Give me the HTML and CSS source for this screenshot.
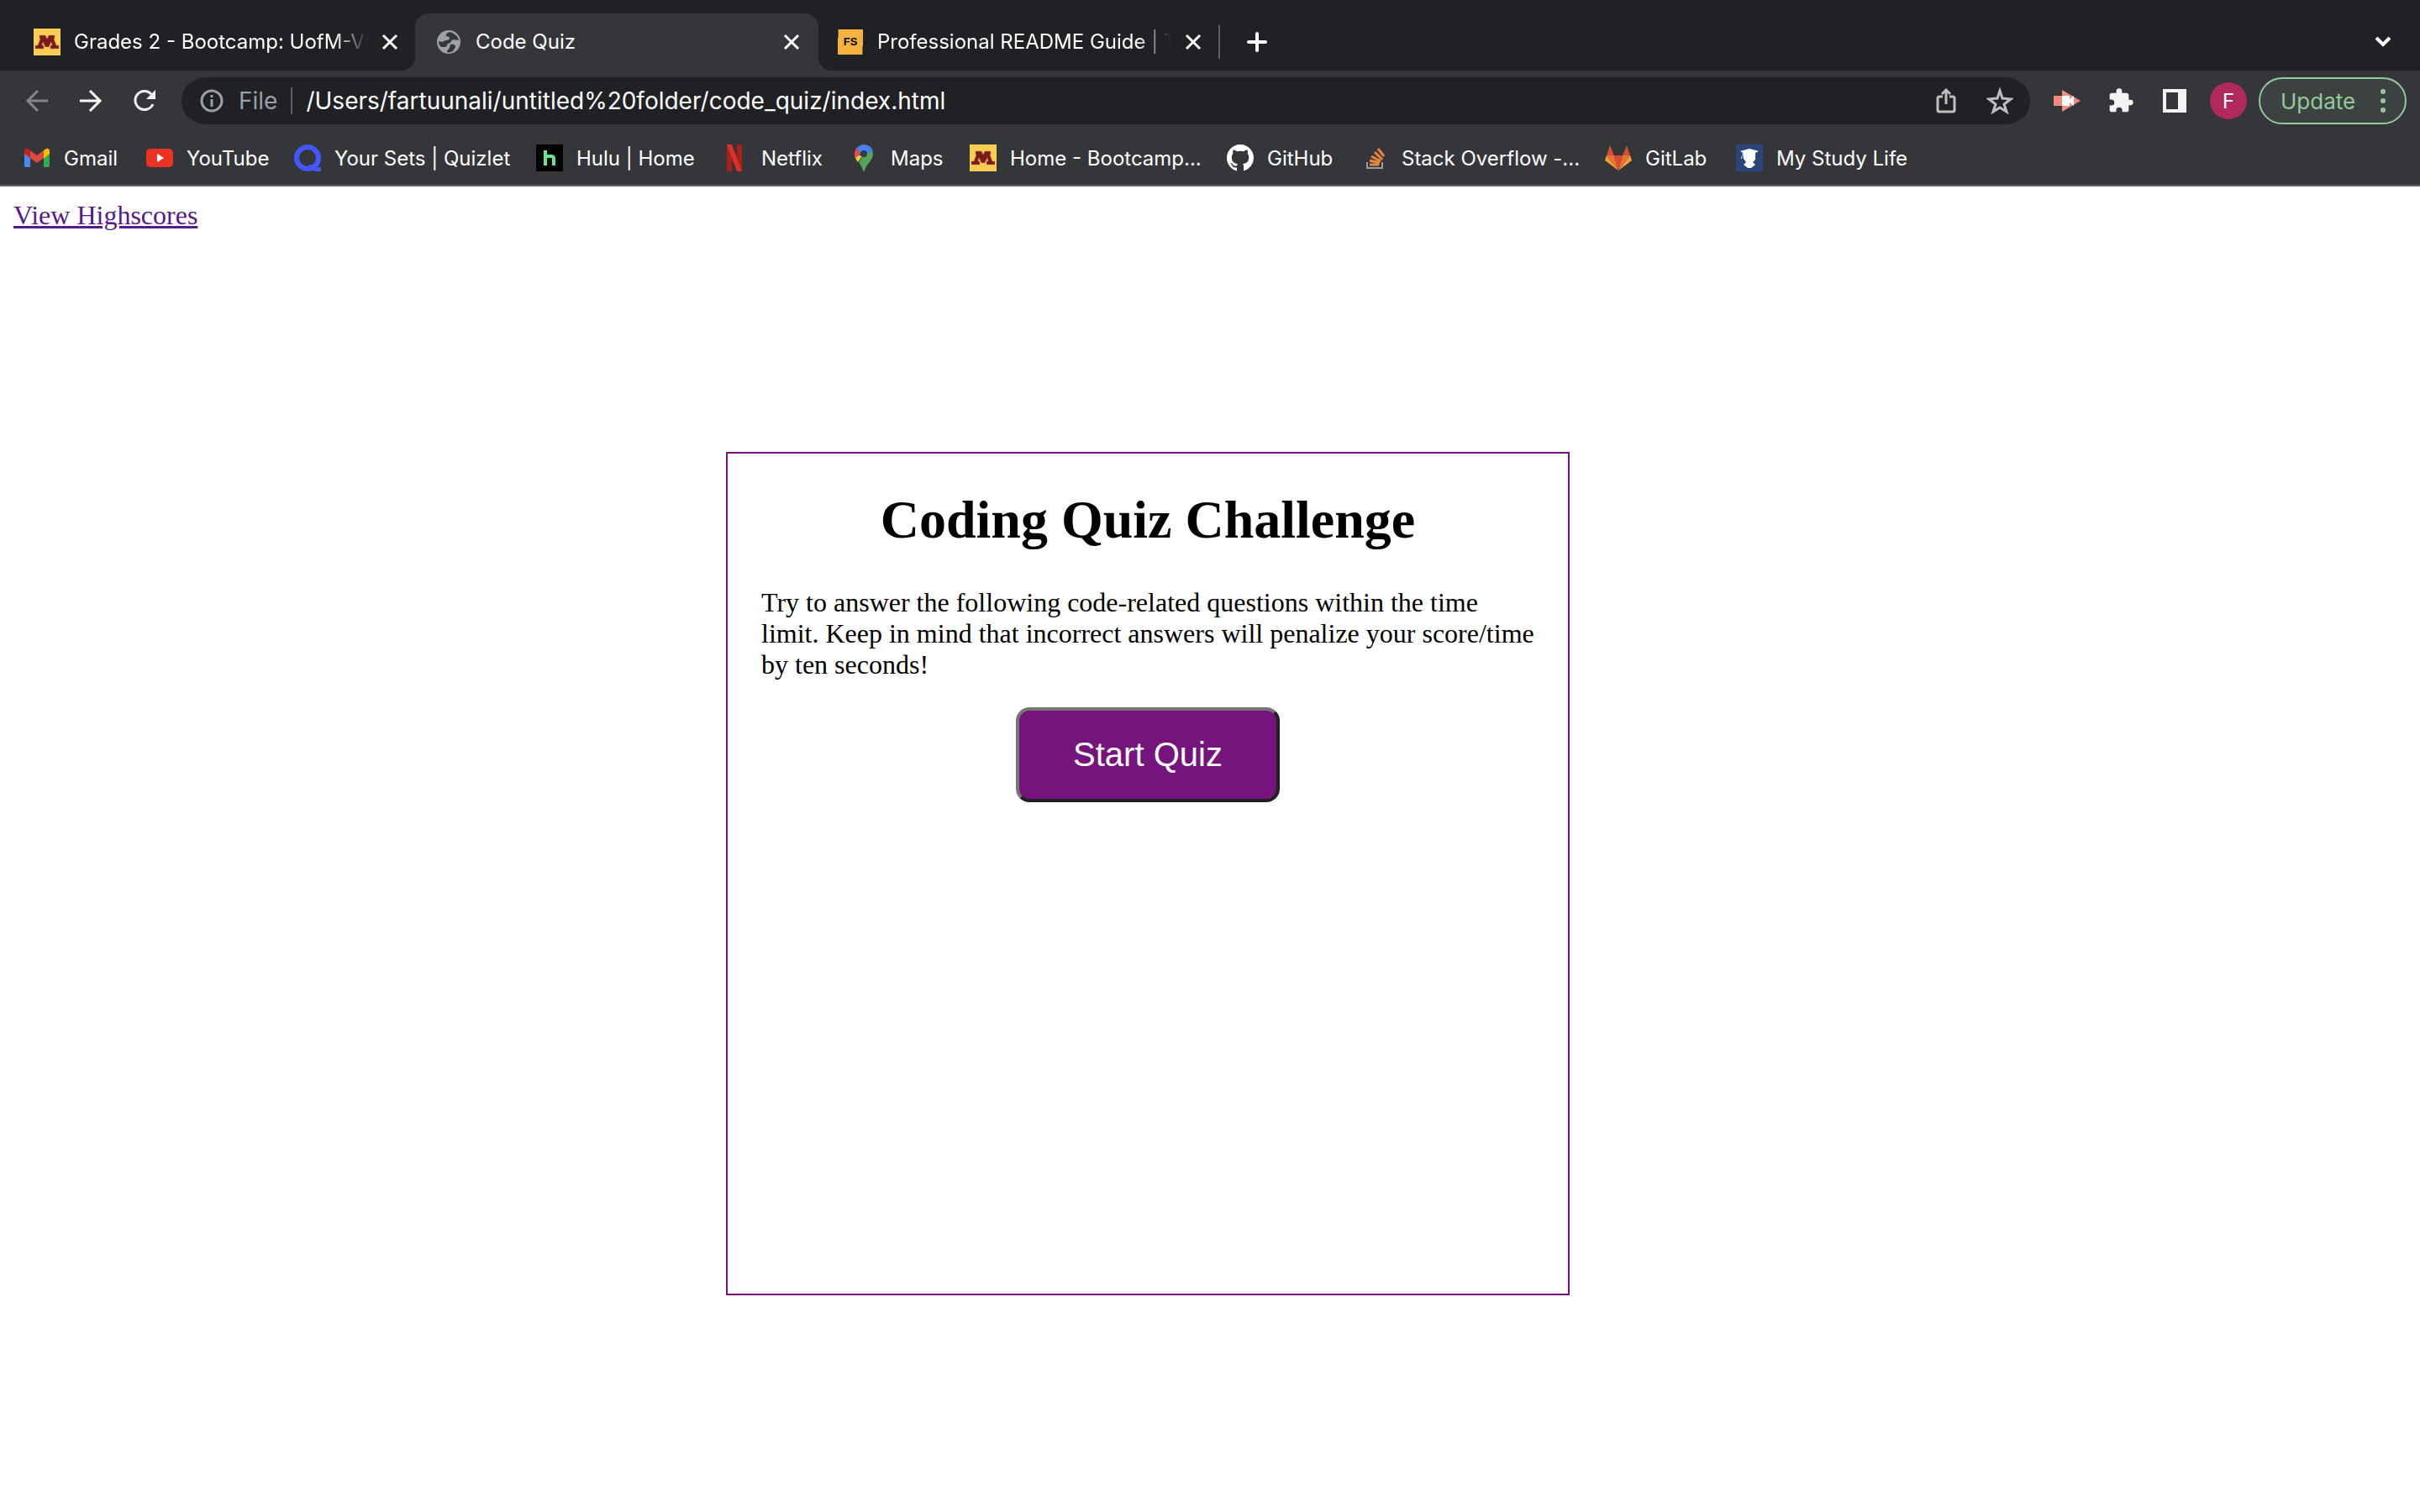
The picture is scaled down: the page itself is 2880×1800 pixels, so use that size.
FILE: index.html
```html
<!DOCTYPE html>
<html lang="en">
<head>
<meta charset="utf-8">
<title>Code Quiz</title>
<link rel="stylesheet" href="styles.css">
</head>
<body>
<svg class="defs" aria-hidden="true">
  <symbol id="close" viewBox="0 0 20 20"><path d="M2 2l16 16M18 2L2 18" stroke="currentColor" stroke-width="3" fill="none"/></symbol>
  <symbol id="umn" viewBox="0 0 32 32"><path d="M0 0h32v32H0z" fill="#f9cd53"/><path d="M7 8h7l2 4 2-4h7v4h-1l3 8h3v4H20v-4h2l-1-4-3 6h-4l-3-6-1 4h2v4H2v-4h3l3-8H7z" fill="#7a1a20" stroke="#c98a3a" stroke-width=".5"/></symbol>
</svg>
<header class="browser">
  <nav class="tabs" aria-label="Tabs">
    <div class="tab">
      <svg class="ico"><use href="#umn"/></svg>
      <span class="tab-title fade">Grades 2 - Bootcamp: UofM-VI</span>
      <button class="plain" aria-label="Close tab"><svg class="x"><use href="#close"/></svg></button>
    </div>
    <div class="tab active">
      <svg class="ico" viewBox="0 0 32 32"><circle cx="16" cy="16" r="14" fill="#9aa0a6"/><path d="M17 4c-3 1-5 3-4 5 2 1 4 0 4 3-1 3-6 1-8 4l-5-1c0 3 1 5 3 7 4 0 7 0 7-2 0-3 4-2 5-5 2-3 5-1 9-1-1-4-4-8-11-10zM18 19c4-1 6 0 6 3l-3 5c-3 1-5 2-7 1 0-3 2-3 3-5z" fill="#35363a"/></svg>
      <span class="tab-title">Code Quiz</span>
      <button class="plain" aria-label="Close tab"><svg class="x"><use href="#close"/></svg></button>
    </div>
    <div class="tab last">
      <svg class="ico" viewBox="0 0 32 32"><path d="M1 1h30v30H1z" fill="#f5b23d"/><path d="M1 1v10M31 21v10" stroke="#111" stroke-width="1"/><text x="16" y="20" text-anchor="middle" class="fs">FS</text></svg>
      <span class="tab-title fade">Professional README Guide | T</span>
      <button class="plain" aria-label="Close tab"><svg class="x"><use href="#close"/></svg></button>
    </div>
    <button class="plain new" aria-label="New tab"><svg width="24" height="24"><path d="M12 2v20M2 12h20" stroke="#fff" stroke-width="4" stroke-linecap="round"/></svg></button>
    <button class="plain search" aria-label="Search tabs"><svg width="20" height="14"><path d="M2 2l8 8 8-8" stroke="#fff" stroke-width="4" fill="none"/></svg></button>
  </nav>
  <div class="toolbar">
    <div class="history">
      <button class="plain" aria-label="Back"><svg width="32" height="32" fill="none" stroke="#85868a" stroke-width="3"><path d="M29 16H5M17 4L5 16l12 12"/></svg></button>
      <button class="plain" aria-label="Forward"><svg width="32" height="32" fill="none" stroke="#fff" stroke-width="3"><path d="M3 16h24M15 4l12 12-12 12"/></svg></button>
      <button class="plain" aria-label="Reload"><svg width="32" height="32"><path d="M26 20a11 11 0 1 1-2-12" fill="none" stroke="#f1f3f4" stroke-width="3"/><path d="M29 3v11H18z" fill="#f1f3f4"/></svg></button>
    </div>
    <div class="address">
      <svg width="28" height="28"><circle cx="14" cy="14" r="12" fill="none" stroke="#9aa0a6" stroke-width="3"/><path d="M14 12v9M14 7v3" stroke="#9aa0a6" stroke-width="3"/></svg>
      <label class="scheme" for="url">File</label>
      <input class="url" id="url" value="/Users/fartuunali/untitled%20folder/code_quiz/index.html">
      <button class="plain share" aria-label="Share"><svg width="28" height="32" fill="none" stroke="#bdbec0" stroke-width="3"><path d="M10 11H6a2 2 0 0 0-2 2v14a2 2 0 0 0 2 2h16a2 2 0 0 0 2-2V13a2 2 0 0 0-2-2h-4M14 20V3M9 8l5-5 5 5"/></svg></button>
      <button class="plain" aria-label="Bookmark"><svg width="32" height="32"><path d="M16 4l3 9 10 1-8 6 3 9-8-5-8 5 3-9-8-6 10-1z" fill="none" stroke="#bdbec0" stroke-width="3"/></svg></button>
    </div>
    <div class="extensions">
      <button class="plain" aria-label="Screen recorder"><svg width="32" height="32"><path d="M0 10h10V3l22 13-22 13v-7H0z" fill="#f28b82"/><path d="M10 10h9v4l5-4v12l-5-4v4h-9z" fill="#fff"/></svg></button>
      <button class="plain" aria-label="Extensions"><svg width="32" height="32" viewBox="0 0 24 24"><path d="M20.5 11H19V7a2 2 0 0 0-2-2h-4V3.500a2.500 2.500 0 0 0-5 0V5H4a2 2 0 0 0-2 2v3.800h1.500a2.700 2.700 0 0 1 0 5.400H2V20a2 2 0 0 0 2 2h3.800v-1.500a2.700 2.700 0 0 1 5.400 0V22H17a2 2 0 0 0 2-2v-4h1.500a2.500 2.500 0 0 0 0-5z" fill="#f1f3f4"/></svg></button>
      <button class="plain" aria-label="Side panel"><svg width="32" height="32"><path d="M2 2h28v28H2zM6 6v20h14V6z" fill="#f1f3f4" fill-rule="evenodd"/></svg></button>
    </div>
    <button class="avatar" aria-label="Profile F">F</button>
    <button class="update">Update<svg width="8" height="32" fill="#93c99b"><circle cx="4" cy="5" r="3"/><circle cx="4" cy="16" r="3"/><circle cx="4" cy="27" r="3"/></svg></button>
  </div>
  <nav class="bookmarks" aria-label="Bookmarks">
    <a href="#"><svg class="ico" viewBox="0 0 32 32"><path d="M1 8l7 5v14H3a2 2 0 0 1-2-2z" fill="#4f87ec"/><path d="M31 8l-7 5v14h5a2 2 0 0 0 2-2z" fill="#34a853"/><path d="M24 7l3-2c2-1 4 0 4 3v3l-7 6z" fill="#fbbc04"/><path d="M8 7l8 6 8-6v9l-8 6-8-6z" fill="#dc4b3e"/><path d="M8 7L5 5C3 4 1 5 1 8v3l7 5z" fill="#c5221f"/></svg>Gmail</a>
    <a href="#"><svg class="ico" viewBox="0 0 32 32"><rect y="5" width="32" height="22" rx="5" fill="#ea3323"/><path d="M13 11l8 5-8 5z" fill="#fff"/></svg>YouTube</a>
    <a href="#"><svg class="ico" viewBox="0 0 32 32"><circle cx="16" cy="16" r="13" fill="none" stroke="#4257ff" stroke-width="6"/><path d="M17 24h7l3 3h5v5h-5c-4 0-7-3-10-8z" fill="#4257ff"/></svg>Your Sets | Quizlet</a>
    <a href="#"><svg class="ico" viewBox="0 0 32 32"><path d="M0 0h32v32H0z"/><path d="M11 7v18M21 25v-8q0-3-3-3h-4q-3 0-3 3" fill="none" stroke="#66e58b" stroke-width="4"/></svg>Hulu | Home</a>
    <a href="#"><svg class="ico" viewBox="0 0 32 32"><path d="M7 0h6v32H7zM19 0h6v32h-6z" fill="#a8201a"/><path d="M7 0h6l12 32h-6z" fill="#dd3027"/></svg>Netflix</a>
    <a href="#"><svg class="ico" viewBox="0 0 32 32"><path d="M27 11c0 8-8 12-10 20q-1 2-2 0c-1-4-3-7-5-10L22 4q5 3 5 7z" fill="#53a658"/><path d="M5 11l9 3-5 7q-4-5-4-10z" fill="#f6c344"/><path d="M8 3l7 6-9 7q-3-7 2-13z" fill="#dc5044"/><path d="M8 4q4-4 9-4 8 1 10 8l-8 3-8-1z" fill="#4a80ee"/><circle cx="16" cy="11" r="4" fill="#303b55"/></svg>Maps</a>
    <a href="#"><svg class="ico"><use href="#umn"/></svg>Home - Bootcamp...</a>
    <a href="#"><svg class="ico" viewBox="0 0 16 16"><path fill="#fff" d="M8 0C3.580 0 0 3.580 0 8c0 3.540 2.290 6.530 5.470 7.590.4.070.55-.17.55-.38 0-.19-.01-.82-.01-1.490-2.010.37-2.530-.49-2.690-.94-.09-.23-.48-.94-.82-1.130-.28-.15-.68-.52-.01-.53.63-.01 1.080.58 1.230.82.72 1.210 1.870.87 2.330.66.07-.52.28-.87.51-1.070-1.780-.2-3.640-.89-3.640-3.950 0-.87.31-1.590.82-2.150-.08-.2-.36-1.020.08-2.120 0 0 .67-.21 2.200.82.64-.18 1.320-.27 2-.27s1.360.09 2 .27c1.530-1.040 2.200-.82 2.200-.82.44 1.100.16 1.920.08 2.120.51.56.82 1.270.82 2.150 0 3.070-1.870 3.750-3.650 3.950.29.25.54.73.54 1.480 0 1.070-.01 1.930-.01 2.200 0 .21.15.46.55.38A8 8 0 0 0 16 8c0-4.420-3.580-8-8-8z"/></svg>GitHub</a>
    <a href="#"><svg class="ico" viewBox="0 0 32 32" fill="none"><path d="M7 21v7h18v-7" stroke="#9b9ea0" stroke-width="2"/><path d="M10 24h11M10 19l12 3M12 14l11 6M16 9l9 9M20 5l7 9" stroke="#e8863a" stroke-width="3"/></svg>Stack Overflow -...</a>
    <a href="#"><svg class="ico" viewBox="0 0 32 32"><path d="M6 1l5 12H2zM26 1l4 12h-9z" fill="#d94c32"/><path d="M2 13l14 18L0 19zM30 13L16 31l16-12z" fill="#f0a13c"/><path d="M2 13h9l5 18zM30 13h-9l-5 18z" fill="#ec7233"/><path d="M11 13h10l-5 18z" fill="#d94c32"/></svg>GitLab</a>
    <a href="#"><svg class="ico" viewBox="0 0 32 32"><path d="M0 0h32v32H0z" fill="#2b4479"/><path d="M5 8l11-3 11 3-4 2v8l-3 3 3 3-5 4h-4l-5-4 3-3-3-4-1-7-1 7H6l2-7z" fill="#fff"/></svg>My Study Life</a>
  </nav>
</header>
<main class="page">
  <a class="scores" href="#scores">View Highscores</a>
  <section class="quiz">
    <h1>Coding Quiz Challenge</h1>
    <p>Try to answer the following code-related questions within the time limit. Keep in mind that incorrect answers will penalize your score/time by ten seconds!</p>
    <button class="start">Start Quiz</button>
  </section>
</main>
</body>
</html>
```
FILE: styles.css
```css
* { box-sizing: border-box; }
body {
  margin: 0;
  background: #fff;
  color: #000;
  font-family: "Liberation Serif", serif;
  font-size: 32px;
}
svg { display: block; flex: none; }
.defs { position: absolute; width: 0; height: 0; }

.browser {
  background: #35363a;
  border-bottom: 2px solid #5f5e62;
  color: #fff;
  font-family: Inter, sans-serif;
  font-size: 24px;
}
.plain { padding: 0; border: 0; background: none; color: inherit; }
.ico { width: 32px; height: 32px; }
.x { width: 20px; height: 20px; }
.fs { font: bold 13px "Liberation Sans", sans-serif; }

.tabs {
  display: flex;
  align-items: center;
  height: 84px;
  padding-top: 16px;
  background: #202124;
}
.tab {
  display: flex;
  align-items: center;
  gap: 16px;
  width: 494px;
  height: 68px;
  padding: 0 20px 0 40px;
}
.tab-title { flex: 1; overflow: hidden; white-space: nowrap; line-height: 32px; }
.fade { -webkit-mask-image: linear-gradient(90deg, #000 88%, transparent); mask-image: linear-gradient(90deg, #000 88%, transparent); }
.tab.active {
  position: relative;
  width: 480px;
  padding: 0 22px 0 24px;
  border-radius: 16px 16px 0 0;
  background: #35363a;
}
.tab.active::before, .tab.active::after {
  content: "";
  position: absolute;
  bottom: 0;
  width: 16px;
  height: 16px;
}
.tab.active::before { right: 100%; background: radial-gradient(circle at 0 0, #202124 16px, #35363a 16px); }
.tab.active::after { left: 100%; background: radial-gradient(circle at 100% 0, #202124 16px, #35363a 16px); }
.tab.last { width: 476px; padding-left: 22px; }
.new { height: 40px; padding: 0 32px; border-left: 2px solid #5f6063; }
.search { margin: 0 34px 0 auto; }

.toolbar { display: flex; align-items: center; padding: 8px 16px 8px 28px; }
.history { display: flex; gap: 32px; width: 188px; }
.address {
  flex: 1;
  display: flex;
  align-items: center;
  height: 56px;
  padding: 0 20px 0 22px;
  border-radius: 28px;
  background: #202124;
  font-size: 28px;
}
.scheme { margin-left: 18px; padding-right: 16px; border-right: 2px solid #5f6063; color: #9aa0a6; line-height: 32px; }
.url { flex: 1; margin-left: 16px; padding: 0; border: 0; background: none; color: #fff; font: inherit; }
.share { margin-right: 34px; }
.extensions { display: flex; gap: 32px; margin: 0 26px 0 28px; }
.avatar {
  width: 44px;
  height: 44px;
  margin-right: 14px;
  padding: 0;
  border: 0;
  border-radius: 50%;
  background: #b02a5b;
  color: #fff;
  font: 24px Inter, sans-serif;
}
.update {
  display: flex;
  align-items: center;
  justify-content: space-between;
  width: 176px;
  height: 56px;
  padding: 0 22px 0 24px;
  border: 2px solid #93c99b;
  border-radius: 28px;
  background: #3c4241;
  color: #93c99b;
  font: 26px Inter, sans-serif;
}
.bookmarks {
  display: grid;
  grid-template-columns: 146px 176px 288px 220px 154px 142px 306px 160px 290px 156px auto;
  align-items: center;
  height: 64px;
  padding: 0 28px;
}
.bookmarks a { display: flex; align-items: center; gap: 16px; color: #fff; text-decoration: none; white-space: nowrap; }

.page { padding: 16px 0; }
.scores { display: block; width: max-content; margin-left: 16px; color: #551a8b; line-height: 37px; }
.quiz {
  width: 1004px;
  max-width: 70%;
  min-height: 1004px;
  margin: 263px 0 0 30%;
  border: 2px solid #75147c;
  text-align: center;
}
.quiz h1 { margin: 42px 40px 44px; font-size: 64px; line-height: 73px; }
.quiz p { margin: 0 40px 32px; line-height: 37px; text-align: left; }
.start {
  padding: 30px 64px;
  border: 4px solid;
  border-color: #767676 #212121 #212121 #767676;
  border-radius: 16px;
  background: #75147c;
  color: #fff;
  font: 40px/45px "Liberation Sans", sans-serif;
}
```
